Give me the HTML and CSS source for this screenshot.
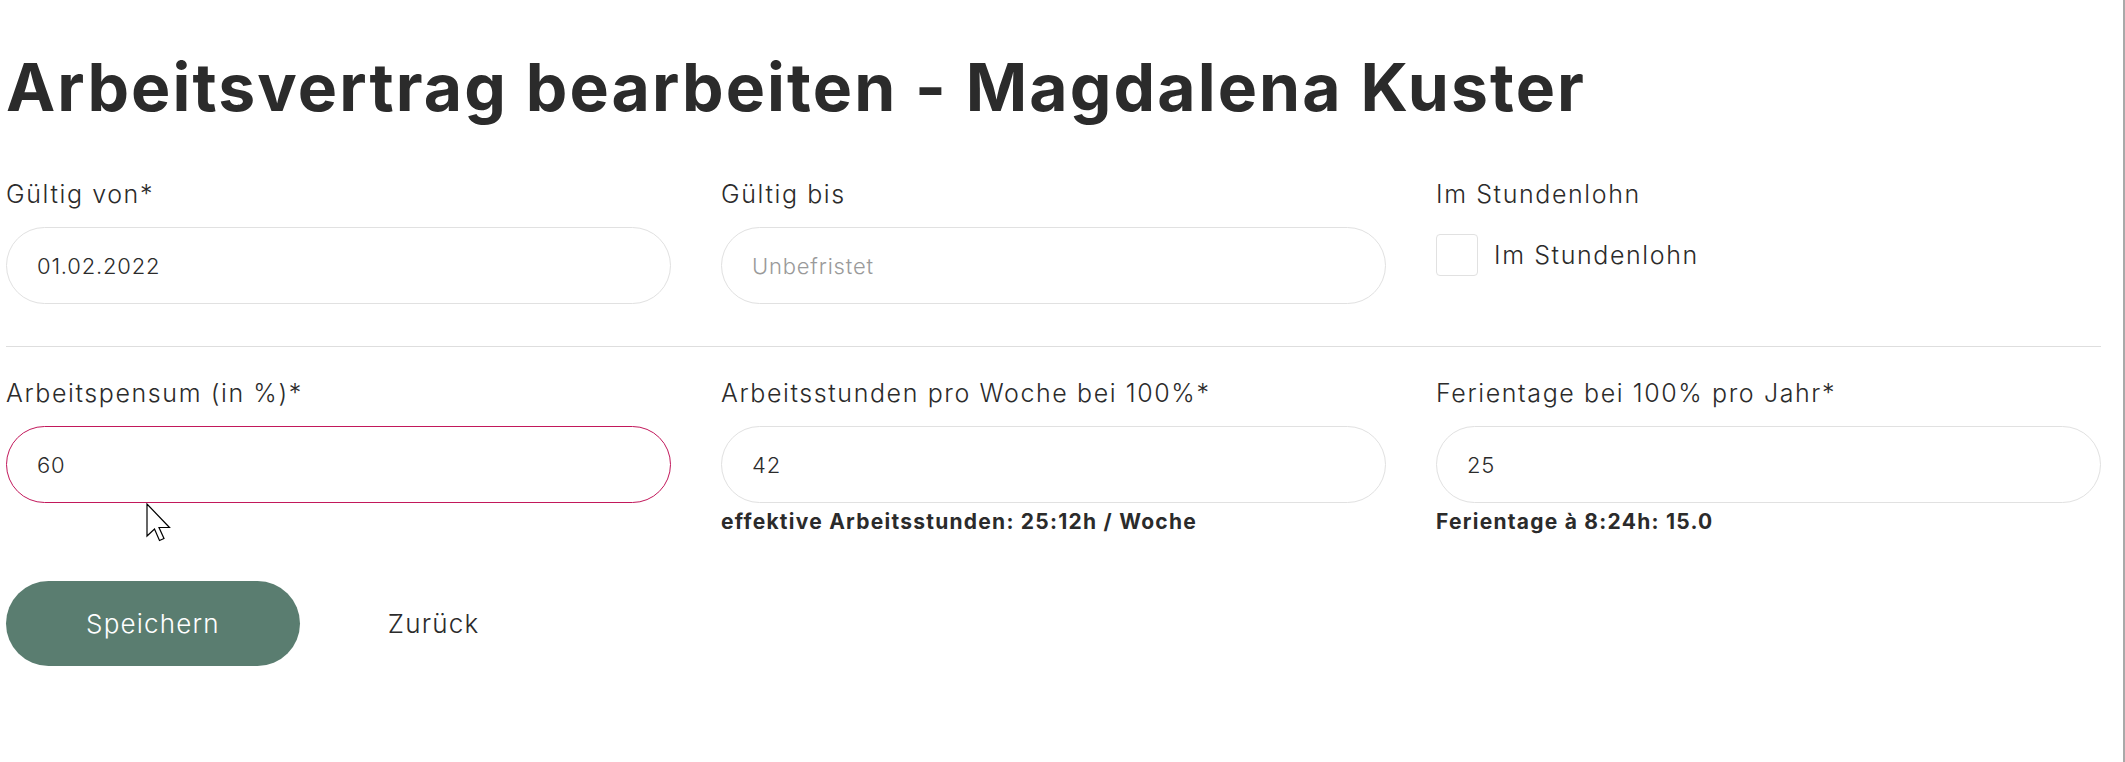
FILE: index.html
```html
<!DOCTYPE html>
<html lang="de">
<head>
<meta charset="utf-8">
<title>Arbeitsvertrag bearbeiten</title>
<link rel="stylesheet" href="styles.css">
</head>
<body>
<div class="window">
  <main class="page">
    <h1 class="title">Arbeitsvertrag bearbeiten - Magdalena Kuster</h1>
    <form class="form">
      <div class="row">
        <div class="field">
          <label class="label">Gültig von*</label>
          <input class="input" type="text" value="01.02.2022">
        </div>
        <div class="field">
          <label class="label">Gültig bis</label>
          <input class="input" type="text" placeholder="Unbefristet">
        </div>
        <div class="field">
          <label class="label">Im Stundenlohn</label>
          <div class="check">
            <span class="check-box"></span>
            <span class="check-label">Im Stundenlohn</span>
          </div>
        </div>
      </div>
      <hr class="divider">
      <div class="row">
        <div class="field field-cursor">
          <label class="label">Arbeitspensum (in %)*</label>
          <input class="input input-error" type="text" value="60">
          <svg class="cursor" width="27" height="40" viewBox="0 0 27 40">
            <path d="M1 1 L1 33 L8.5 26 L13.5 37.5 L18 35.5 L13 24.5 L23.5 24.5 Z" fill="#fff" stroke="#000" stroke-width="1.2" stroke-linejoin="miter"/>
          </svg>
        </div>
        <div class="field">
          <label class="label">Arbeitsstunden pro Woche bei 100%*</label>
          <input class="input" type="text" value="42">
          <p class="hint">effektive Arbeitsstunden: 25:12h / Woche</p>
        </div>
        <div class="field">
          <label class="label">Ferientage bei 100% pro Jahr*</label>
          <input class="input" type="text" value="25">
          <p class="hint">Ferientage à 8:24h: 15.0</p>
        </div>
      </div>
      <div class="actions">
        <button class="btn btn-primary" type="button">Speichern</button>
        <button class="btn btn-link" type="button">Zurück</button>
      </div>
    </form>
  </main>
</div>
</body>
</html>
```
FILE: styles.css
```css
* { box-sizing: border-box; }

html, body {
  margin: 0;
  padding: 0;
  background: #ffffff;
}

body {
  font-family: Inter, "Noto Sans", sans-serif;
  color: #2b2b2b;
}

.window {
  width: 2125px;
  height: 762px;
  border-right: 2px solid #a9a9a9;
  overflow: hidden;
}

.page {
  width: 2101px;
  padding-left: 6px;
}

.title {
  margin: 0;
  padding-top: 47px;
  font-size: 66px;
  line-height: 80px;
  font-weight: 700;
  color: #2b2b2b;
  letter-spacing: 2.1px;
  white-space: nowrap;
}

.form {
  display: flex;
  flex-direction: column;
}

.row {
  display: grid;
  grid-template-columns: repeat(3, 1fr);
  column-gap: 50px;
  align-items: start;
}

.row:first-child {
  margin-top: 52px;
}

.field {
  display: flex;
  flex-direction: column;
}

.field-cursor {
  position: relative;
}

.label {
  font-size: 25px;
  line-height: 30px;
  font-weight: 300;
  letter-spacing: 1.6px;
  color: #2b2b2b;
}

.input {
  margin-top: 18px;
  height: 77px;
  width: 100%;
  border: 1px solid #e1e1e1;
  border-radius: 39px;
  padding: 0 30px;
  font-family: Inter, "Noto Sans", sans-serif;
  font-size: 22px;
  font-weight: 300;
  letter-spacing: 0.8px;
  color: #2b2b2b;
  background: #fff;
  outline: none;
}

.input::placeholder {
  color: #9a9a9a;
}

.input-error {
  border-color: #c2185b;
}

.check {
  margin-top: 25px;
  display: flex;
  align-items: center;
  gap: 16px;
}

.check-box {
  width: 42px;
  height: 42px;
  border: 1px solid #e1e1e1;
  border-radius: 4px;
  background: #fff;
}

.check-label {
  font-size: 25px;
  font-weight: 300;
  line-height: 30px;
  letter-spacing: 1.6px;
}

.divider {
  margin: 42px 0 31px;
  border: 0;
  border-top: 1px solid #dedede;
  height: 0;
  width: 100%;
}

.hint {
  margin: 6px 0 0;
  font-size: 21px;
  line-height: 26px;
  font-weight: 700;
  letter-spacing: 1.25px;
  color: #2b2b2b;
}

.cursor {
  position: absolute;
  left: 140px;
  top: 125px;
}

.actions {
  margin-top: 46px;
  display: flex;
  align-items: center;
  gap: 8px;
}

.btn {
  height: 85px;
  padding: 0 80px;
  border: 0;
  border-radius: 43px;
  font-family: Inter, "Noto Sans", sans-serif;
  font-size: 26px;
  font-weight: 300;
  letter-spacing: 1.2px;
  cursor: pointer;
}

.btn-primary {
  background: #5a7d70;
  color: #ffffff;
}

.btn-link {
  background: transparent;
  color: #2b2b2b;
}
```
